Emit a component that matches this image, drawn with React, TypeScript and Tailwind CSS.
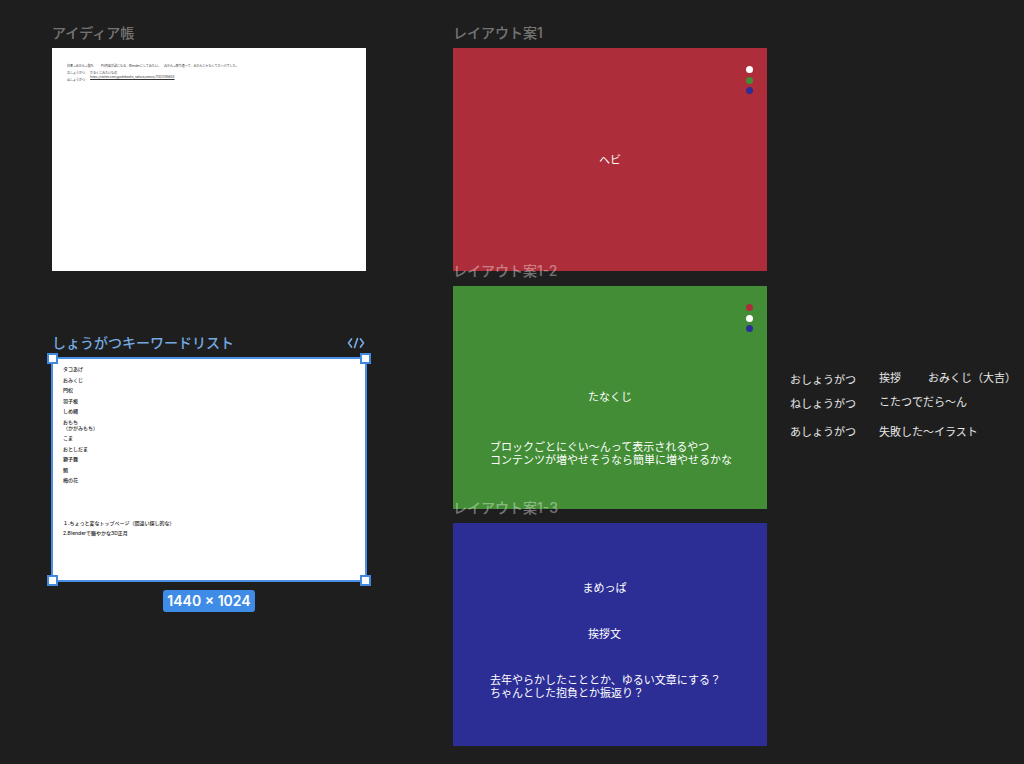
import type { ReactNode } from "react";
import clsx from "clsx";

const keywords = [
    "タコあげ",
    "おみくじ",
    "門松",
    "羽子板",
    "しめ縄",
    "おもち\n（かがみもち）",
    "こま",
    "おとしだま",
    "獅子舞",
    "鯛",
    "梅の花",
];

function Label({ children, className }: { children: ReactNode; className?: string }) {
    return (
        <h2 className={ clsx("relative mb-[5px] h-5 text-[14px] leading-5 font-medium whitespace-nowrap", className ?? "text-white/40") }>
            { children }
        </h2>
    );
}

function Frame({ children, className }: { children?: ReactNode; className: string }) {
    return <div className={ clsx("relative h-[223px] w-full", className) }>{ children }</div>;
}

function Dots({ colors }: { colors: string[] }) {
    return (
        <div className="absolute top-[18px] right-[14px] flex h-7 flex-col justify-between">
            { colors.map((color) => (
                <span key={ color } className={ clsx("size-[7px] rounded-full", color) } />
            )) }
        </div>
    );
}

function Handle({ className }: { className: string }) {
    return <span className={ clsx("absolute size-[11px] border-2 border-[#4189e0] bg-white", className) } />;
}

function CodeIcon() {
    return (
        <svg width="18" height="12" viewBox="0 0 18 12" fill="none" stroke="currentColor" strokeWidth="1.7" strokeLinecap="round" strokeLinejoin="round">
            <path d="M4.500 2 1.500 6l3 4M13.500 2l3 4-3 4M10.500 1.500l-3 9" />
        </svg>
    );
}

export default function App() {
    return (
        <main
            lang="ja"
            className="flex min-h-screen w-full items-start overflow-hidden bg-[#1e1e1e] pt-[23px] pl-[52px] font-['Inter','Noto_Sans_CJK_JP',sans-serif]"
        >
            {/* Ideas and keywords */ }
            <section className="w-[314px] shrink-0">
                <Label>アイディア帳</Label>
                <Frame className="bg-white pt-4 pl-[15px] text-[3px] leading-[4px] whitespace-nowrap text-[#333]">
                    <div className="flex">
                        <p className="w-[34px]">白黒→みかん→鏡も</p>
                        <p className="w-[63px]">PV内容が話になる、Blenderにしてみたい。</p>
                        <p>みかん→取り違って、みかんじゃなくてカッパでした。</p>
                    </div>
                    <div className="mt-[3px] flex">
                        <div className="w-[23px]">
                            <p>おしょうがつ</p>
                            <p className="mt-[3px]">ねしょうがつ</p>
                        </div>
                        <div>
                            <p>だるくじみたいなの</p>
                            <p className="underline">https://twitter.com/guidebooks_sakura/status/17420785804</p>
                        </div>
                    </div>
                </Frame>

                <Label className="mt-[62px] flex items-center justify-between pr-px text-[#75a9e0]">
                    しょうがつキーワードリスト
                    <CodeIcon />
                </Label>
                <Frame className="bg-white px-[11px] pt-2 text-[5px] leading-[6px] font-medium text-[#222]">
                    <ul className="flex h-[117px] flex-col justify-between">
                        { keywords.map((word) => (
                            <li key={ word } className="whitespace-pre-line">{ word }</li>
                        )) }
                    </ul>
                    <p className="mt-[37px]">１.ちょっと変なトップページ（間違い探し的な）</p>
                    <p className="mt-1">2.Blenderで賑やかな3D正月</p>

                    {/* Selection */ }
                    <div className="absolute -inset-px border-2 border-[#4a90e6]" />
                    <Handle className="-top-[5px] -left-[5px]" />
                    <Handle className="-top-[5px] -right-[5px]" />
                    <Handle className="-bottom-[5px] -left-[5px]" />
                    <Handle className="-right-[5px] -bottom-[5px]" />
                </Frame>
                <div className="mt-[9px] flex justify-center">
                    <span className="rounded-[3px] bg-[#3f8ce6] px-1 text-[14px] leading-[22px] font-semibold text-white">
                        1440 × 1024
                    </span>
                </div>
            </section>

            {/* Layout drafts */ }
            <section className="ml-[87px] w-[314px] shrink-0 text-[11px] leading-[13px] text-white">
                <Label>レイアウト案1</Label>
                <Frame className="bg-[#ad2e3a] pt-[106px]">
                    <Dots colors={ ["bg-white", "bg-[#428d35]", "bg-[#2c2e96]"] } />
                    <p className="text-center">ヘビ</p>
                </Frame>

                <Label className="-mt-[10px] text-white/40">レイアウト案1-2</Label>
                <Frame className="bg-[#428d35] pt-[105px]">
                    <Dots colors={ ["bg-[#ad2e3a]", "bg-white", "bg-[#2c2e96]"] } />
                    <p className="text-center">たなくじ</p>
                    <p className="mt-[37px] pl-[37px] whitespace-nowrap">
                        ブロックごとにぐい〜んって表示されるやつ
                        <br />
                        コンテンツが増やせそうなら簡単に増やせるかな
                    </p>
                </Frame>

                <Label className="-mt-[11px] text-white/40">レイアウト案1-3</Label>
                <Frame className="bg-[#2c2e96] pt-[59px]">
                    <p className="pr-[11px] text-center">まめっぱ</p>
                    <p className="mt-[33px] pr-[11px] text-center">挨拶文</p>
                    <p className="mt-[33px] pl-[37px] whitespace-nowrap">
                        去年やらかしたこととか、ゆるい文章にする？
                        <br />
                        ちゃんとした抱負とか振返り？
                    </p>
                </Frame>
            </section>

            {/* Loose notes */ }
            <section className="mt-[349px] ml-[23px] flex shrink-0 gap-[23px] text-[11px] leading-[13px] whitespace-nowrap text-white/90">
                <div className="pt-[2px]">
                    <p>おしょうがつ</p>
                    <p className="mt-[11px]">ねしょうがつ</p>
                    <p className="mt-[15px]">あしょうがつ</p>
                </div>
                <div>
                    <p className="flex gap-[27px]">
                        <span>挨拶</span>
                        <span>おみくじ（大吉）</span>
                    </p>
                    <p className="mt-[11px]">こたつでだら〜ん</p>
                    <p className="mt-[17px]">失敗した〜イラスト</p>
                </div>
            </section>
        </main>
    );
}
